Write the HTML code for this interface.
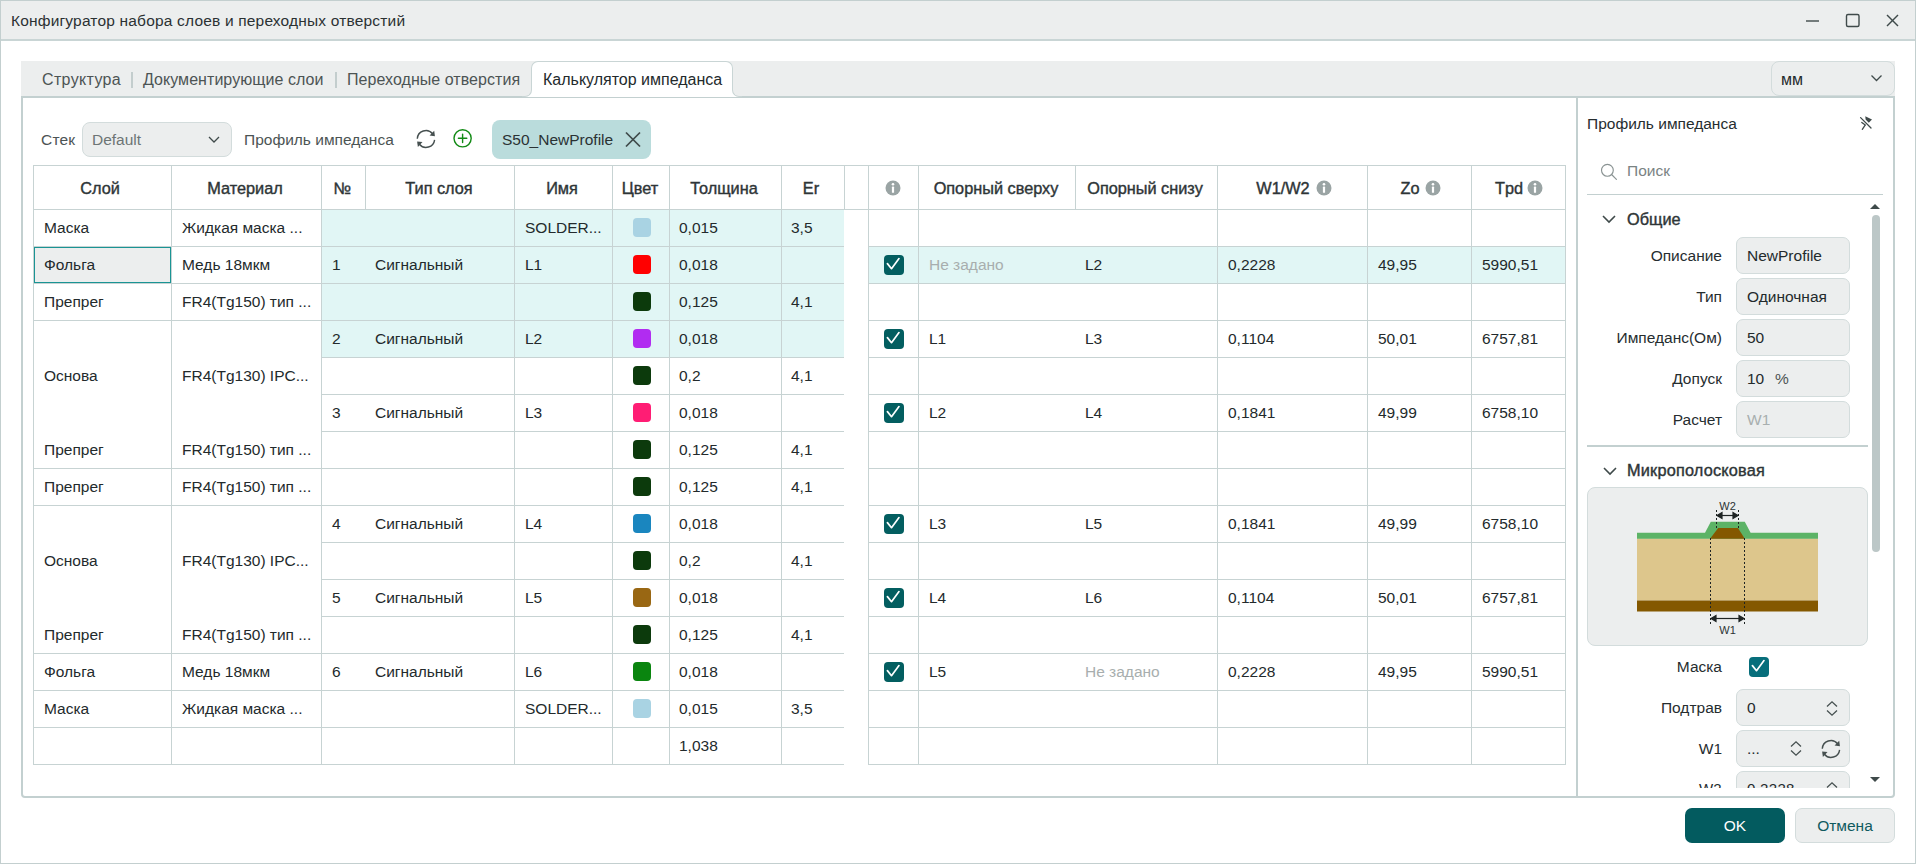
<!DOCTYPE html><html><head><meta charset="utf-8"><style>
html,body{margin:0;padding:0;}
body{width:1916px;height:864px;overflow:hidden;position:relative;background:#fff;font-family:"Liberation Sans",sans-serif;}
.a{position:absolute;box-sizing:border-box;}
.t{position:absolute;white-space:nowrap;}
svg{position:absolute;overflow:visible;}
</style></head><body><div class="a" style="left:0px;top:0px;width:1916px;height:864px;background:#fff;border:1px solid #c3cfcf;"></div><div class="a" style="left:1px;top:1px;width:1914px;height:38px;background:#eceeee;"></div><div class="a" style="left:1px;top:39px;width:1914px;height:2px;background:#c9d5d5;"></div><div class="t" style="left:11px;top:13px;font-size:15.5px;line-height:15.5px;color:#2b3133;letter-spacing:0.18px;">Конфигуратор набора слоев и переходных отверстий</div><svg style="left:0;top:0" width="1916" height="40"><g stroke="#3f4a4a" stroke-width="1.4" fill="none"><line x1="1806" y1="21" x2="1819" y2="21"/><rect x="1846.5" y="14.5" width="12.5" height="12" rx="1.5"/><line x1="1887" y1="15" x2="1898" y2="26"/><line x1="1898" y1="15" x2="1887" y2="26"/></g></svg><div class="a" style="left:21px;top:61px;width:1874px;height:36px;background:#eceeee;"></div><div class="a" style="left:21px;top:96px;width:1874px;height:702px;background:#fff;border:2px solid #c3d0d0;border-radius:0 0 4px 4px;"></div><div class="a" style="left:531px;top:61px;width:202px;height:36px;background:#fff;border:1px solid #c9d5d5;border-bottom:none;border-radius:7px 7px 0 0;"></div><div class="a" style="left:524px;top:89px;width:8px;height:8px;background:#fff;"></div><div class="a" style="left:522px;top:82px;width:10px;height:15px;background:#eceeee;border-right:1px solid #c9d5d5;border-bottom:1px solid #c9d5d5;border-bottom-right-radius:7px;"></div><div class="a" style="left:732px;top:89px;width:8px;height:8px;background:#fff;"></div><div class="a" style="left:732px;top:82px;width:10px;height:15px;background:#eceeee;border-left:1px solid #c9d5d5;border-bottom:1px solid #c9d5d5;border-bottom-left-radius:7px;"></div><div class="t" style="left:42px;top:72px;font-size:16px;line-height:16px;color:#4c5454;letter-spacing:0.35px;">Структура</div><div class="a" style="left:131px;top:72px;width:2px;height:16px;background:#c3cdcd;"></div><div class="t" style="left:143px;top:72px;font-size:16px;line-height:16px;color:#4c5454;letter-spacing:0.05px;">Документирующие слои</div><div class="a" style="left:335px;top:72px;width:2px;height:16px;background:#c3cdcd;"></div><div class="t" style="left:347px;top:72px;font-size:16px;line-height:16px;color:#4c5454;letter-spacing:0.05px;">Переходные отверстия</div><div class="t" style="left:543px;top:72px;font-size:16px;line-height:16px;color:#232a2c;">Калькулятор импеданса</div><div class="a" style="left:1771px;top:61px;width:124px;height:35px;background:#eceeee;border:1px solid #d3dcdc;border-radius:8px;"></div><div class="t" style="left:1781px;top:72px;font-size:16px;line-height:16px;color:#232a2c;">мм</div><svg style="left:0;top:0" width="1916" height="100"><polyline points="1871.5,75.5 1876.5,80.5 1881.5,75.5" stroke="#3f4a4a" stroke-width="1.3" fill="none"/></svg><div class="t" style="left:41px;top:132px;font-size:15.5px;line-height:15.5px;color:#4c5454;letter-spacing:0.2px;">Стек</div><div class="a" style="left:82px;top:122px;width:150px;height:35px;background:#eceeee;border:1px solid #d3dcdc;border-radius:8px;"></div><div class="t" style="left:92px;top:132px;font-size:15.5px;line-height:15.5px;color:#6d7575;">Default</div><svg style="left:0;top:0" width="400" height="200"><polyline points="209,137 214,142 219,137" stroke="#3f4a4a" stroke-width="1.3" fill="none"/></svg><div class="t" style="left:244px;top:132px;font-size:15.5px;line-height:15.5px;color:#4c5454;">Профиль импеданса</div><svg style="left:416px;top:129px" width="20" height="20" viewBox="0 0 20 20"><g fill="none" stroke="#465050" stroke-width="1.4"><path d="M1.3 9.8 A8.6 8.6 0 0 1 16.6 4.8"/><path d="M18.6 10.8 A8.6 8.6 0 0 1 3.4 15.2"/></g><path d="M18.2 1.8 L18.9 7.2 L13.6 6.4 Z" fill="#465050"/><path d="M1.1 12.4 L6.5 13.1 L1.9 18.1 Z" fill="#465050"/></svg><svg style="left:452px;top:129px" width="20" height="20" viewBox="0 0 20 20"><circle cx="10.6" cy="9.3" r="8.6" fill="none" stroke="#118a14" stroke-width="1.4"/>
<line x1="10.6" y1="5.1" x2="10.6" y2="13.5" stroke="#118a14" stroke-width="1.4" stroke-linecap="round"/><line x1="6.4" y1="9.3" x2="14.8" y2="9.3" stroke="#118a14" stroke-width="1.4" stroke-linecap="round"/></svg><div class="a" style="left:492px;top:120px;width:159px;height:39px;background:#badcdc;border-radius:8px;"></div><div class="t" style="left:502px;top:132px;font-size:15.5px;line-height:15.5px;color:#2a3234;">S50_NewProfile</div><svg style="left:0;top:0" width="700" height="200"><g stroke="#3f4a4a" stroke-width="1.7"><line x1="626" y1="132.5" x2="640" y2="146.5"/><line x1="640" y1="132.5" x2="626" y2="146.5"/></g></svg><div class="a" style="left:321px;top:209px;width:523px;height:148px;background:#e1f6f5;"></div><div class="a" style="left:868px;top:246px;width:697px;height:37px;background:#e1f6f5;"></div><div class="a" style="left:34px;top:247px;width:137px;height:36px;background:#eceeee;border:1px solid #1a9494;"></div><div class="a" style="left:33px;top:165px;width:1533px;height:1px;background:#c7d3d3"></div><div class="a" style="left:33px;top:209px;width:1533px;height:1px;background:#c7d3d3"></div><div class="a" style="left:33px;top:246px;width:811px;height:1px;background:#c7d3d3"></div><div class="a" style="left:868px;top:246px;width:698px;height:1px;background:#c7d3d3"></div><div class="a" style="left:33px;top:283px;width:811px;height:1px;background:#c7d3d3"></div><div class="a" style="left:868px;top:283px;width:698px;height:1px;background:#c7d3d3"></div><div class="a" style="left:33px;top:320px;width:811px;height:1px;background:#c7d3d3"></div><div class="a" style="left:868px;top:320px;width:698px;height:1px;background:#c7d3d3"></div><div class="a" style="left:321px;top:357px;width:523px;height:1px;background:#c7d3d3"></div><div class="a" style="left:868px;top:357px;width:698px;height:1px;background:#c7d3d3"></div><div class="a" style="left:321px;top:394px;width:523px;height:1px;background:#c7d3d3"></div><div class="a" style="left:868px;top:394px;width:698px;height:1px;background:#c7d3d3"></div><div class="a" style="left:321px;top:431px;width:523px;height:1px;background:#c7d3d3"></div><div class="a" style="left:868px;top:431px;width:698px;height:1px;background:#c7d3d3"></div><div class="a" style="left:33px;top:468px;width:811px;height:1px;background:#c7d3d3"></div><div class="a" style="left:868px;top:468px;width:698px;height:1px;background:#c7d3d3"></div><div class="a" style="left:33px;top:505px;width:811px;height:1px;background:#c7d3d3"></div><div class="a" style="left:868px;top:505px;width:698px;height:1px;background:#c7d3d3"></div><div class="a" style="left:321px;top:542px;width:523px;height:1px;background:#c7d3d3"></div><div class="a" style="left:868px;top:542px;width:698px;height:1px;background:#c7d3d3"></div><div class="a" style="left:321px;top:579px;width:523px;height:1px;background:#c7d3d3"></div><div class="a" style="left:868px;top:579px;width:698px;height:1px;background:#c7d3d3"></div><div class="a" style="left:321px;top:616px;width:523px;height:1px;background:#c7d3d3"></div><div class="a" style="left:868px;top:616px;width:698px;height:1px;background:#c7d3d3"></div><div class="a" style="left:33px;top:653px;width:811px;height:1px;background:#c7d3d3"></div><div class="a" style="left:868px;top:653px;width:698px;height:1px;background:#c7d3d3"></div><div class="a" style="left:33px;top:690px;width:811px;height:1px;background:#c7d3d3"></div><div class="a" style="left:868px;top:690px;width:698px;height:1px;background:#c7d3d3"></div><div class="a" style="left:33px;top:727px;width:811px;height:1px;background:#c7d3d3"></div><div class="a" style="left:868px;top:727px;width:698px;height:1px;background:#c7d3d3"></div><div class="a" style="left:33px;top:764px;width:811px;height:1px;background:#c7d3d3"></div><div class="a" style="left:868px;top:764px;width:698px;height:1px;background:#c7d3d3"></div><div class="a" style="left:33px;top:165px;width:1px;height:44px;background:#c7d3d3"></div><div class="a" style="left:171px;top:165px;width:1px;height:44px;background:#c7d3d3"></div><div class="a" style="left:321px;top:165px;width:1px;height:44px;background:#c7d3d3"></div><div class="a" style="left:365px;top:165px;width:1px;height:44px;background:#c7d3d3"></div><div class="a" style="left:514px;top:165px;width:1px;height:44px;background:#c7d3d3"></div><div class="a" style="left:612px;top:165px;width:1px;height:44px;background:#c7d3d3"></div><div class="a" style="left:669px;top:165px;width:1px;height:44px;background:#c7d3d3"></div><div class="a" style="left:781px;top:165px;width:1px;height:44px;background:#c7d3d3"></div><div class="a" style="left:844px;top:165px;width:1px;height:44px;background:#c7d3d3"></div><div class="a" style="left:868px;top:165px;width:1px;height:44px;background:#c7d3d3"></div><div class="a" style="left:918px;top:165px;width:1px;height:44px;background:#c7d3d3"></div><div class="a" style="left:1075px;top:165px;width:1px;height:44px;background:#c7d3d3"></div><div class="a" style="left:1217px;top:165px;width:1px;height:44px;background:#c7d3d3"></div><div class="a" style="left:1367px;top:165px;width:1px;height:44px;background:#c7d3d3"></div><div class="a" style="left:1471px;top:165px;width:1px;height:44px;background:#c7d3d3"></div><div class="a" style="left:1565px;top:165px;width:1px;height:44px;background:#c7d3d3"></div><div class="a" style="left:33px;top:209px;width:1px;height:556px;background:#c7d3d3"></div><div class="a" style="left:171px;top:209px;width:1px;height:556px;background:#c7d3d3"></div><div class="a" style="left:321px;top:209px;width:1px;height:556px;background:#c7d3d3"></div><div class="a" style="left:514px;top:209px;width:1px;height:556px;background:#c7d3d3"></div><div class="a" style="left:612px;top:209px;width:1px;height:556px;background:#c7d3d3"></div><div class="a" style="left:669px;top:209px;width:1px;height:556px;background:#c7d3d3"></div><div class="a" style="left:781px;top:209px;width:1px;height:556px;background:#c7d3d3"></div><div class="a" style="left:868px;top:209px;width:1px;height:556px;background:#c7d3d3"></div><div class="a" style="left:918px;top:209px;width:1px;height:556px;background:#c7d3d3"></div><div class="a" style="left:1217px;top:209px;width:1px;height:556px;background:#c7d3d3"></div><div class="a" style="left:1367px;top:209px;width:1px;height:556px;background:#c7d3d3"></div><div class="a" style="left:1471px;top:209px;width:1px;height:556px;background:#c7d3d3"></div><div class="a" style="left:1565px;top:209px;width:1px;height:556px;background:#c7d3d3"></div><div class="t" style="left:-100px;width:400px;text-align:center;top:180px;font-size:16.3px;line-height:16.3px;color:#2e3537;-webkit-text-stroke:0.4px #2e3537;">Слой</div><div class="t" style="left:45px;width:400px;text-align:center;top:180px;font-size:16.3px;line-height:16.3px;color:#2e3537;-webkit-text-stroke:0.4px #2e3537;">Материал</div><div class="t" style="left:142px;width:400px;text-align:center;top:180px;font-size:16.3px;line-height:16.3px;color:#2e3537;-webkit-text-stroke:0.4px #2e3537;">№</div><div class="t" style="left:239px;width:400px;text-align:center;top:180px;font-size:16.3px;line-height:16.3px;color:#2e3537;-webkit-text-stroke:0.4px #2e3537;">Тип слоя</div><div class="t" style="left:362px;width:400px;text-align:center;top:180px;font-size:16.3px;line-height:16.3px;color:#2e3537;-webkit-text-stroke:0.4px #2e3537;">Имя</div><div class="t" style="left:440px;width:400px;text-align:center;top:180px;font-size:16.3px;line-height:16.3px;color:#2e3537;-webkit-text-stroke:0.4px #2e3537;">Цвет</div><div class="t" style="left:524px;width:400px;text-align:center;top:180px;font-size:16.3px;line-height:16.3px;color:#2e3537;-webkit-text-stroke:0.4px #2e3537;">Толщина</div><div class="t" style="left:611px;width:400px;text-align:center;top:180px;font-size:16.3px;line-height:16.3px;color:#2e3537;-webkit-text-stroke:0.4px #2e3537;">Er</div><div class="t" style="left:796px;width:400px;text-align:center;top:180px;font-size:16.3px;line-height:16.3px;color:#2e3537;-webkit-text-stroke:0.4px #2e3537;">Опорный сверху</div><div class="t" style="left:945px;width:400px;text-align:center;top:180px;font-size:16.3px;line-height:16.3px;color:#2e3537;-webkit-text-stroke:0.4px #2e3537;">Опорный снизу</div><div class="t" style="left:1083px;width:400px;text-align:center;top:180px;font-size:16.3px;line-height:16.3px;color:#2e3537;-webkit-text-stroke:0.4px #2e3537;">W1/W2</div><div class="t" style="left:1210px;width:400px;text-align:center;top:180px;font-size:16.3px;line-height:16.3px;color:#2e3537;-webkit-text-stroke:0.4px #2e3537;">Zo</div><div class="t" style="left:1309px;width:400px;text-align:center;top:180px;font-size:16.3px;line-height:16.3px;color:#2e3537;-webkit-text-stroke:0.4px #2e3537;">Tpd</div><svg style="left:885px;top:179.5px" width="16" height="16" viewBox="0 0 16 16"><circle cx="8" cy="8" r="7.5" fill="#9aa4a4"/><circle cx="8" cy="4.3" r="1.3" fill="#fff"/><rect x="6.9" y="6.6" width="2.2" height="6.2" rx="0.6" fill="#fff"/></svg><svg style="left:1315.5px;top:179.5px" width="16" height="16" viewBox="0 0 16 16"><circle cx="8" cy="8" r="7.5" fill="#9aa4a4"/><circle cx="8" cy="4.3" r="1.3" fill="#fff"/><rect x="6.9" y="6.6" width="2.2" height="6.2" rx="0.6" fill="#fff"/></svg><svg style="left:1424.5px;top:179.5px" width="16" height="16" viewBox="0 0 16 16"><circle cx="8" cy="8" r="7.5" fill="#9aa4a4"/><circle cx="8" cy="4.3" r="1.3" fill="#fff"/><rect x="6.9" y="6.6" width="2.2" height="6.2" rx="0.6" fill="#fff"/></svg><svg style="left:1526.5px;top:179.5px" width="16" height="16" viewBox="0 0 16 16"><circle cx="8" cy="8" r="7.5" fill="#9aa4a4"/><circle cx="8" cy="4.3" r="1.3" fill="#fff"/><rect x="6.9" y="6.6" width="2.2" height="6.2" rx="0.6" fill="#fff"/></svg><div class="t" style="left:44px;top:220px;font-size:15.5px;line-height:15.5px;color:#232a2c;">Маска</div><div class="t" style="left:182px;top:220px;font-size:15.5px;line-height:15.5px;color:#232a2c;">Жидкая маска ...</div><div class="t" style="left:525px;top:220px;font-size:15.5px;line-height:15.5px;color:#232a2c;">SOLDER...</div><div class="a" style="left:633px;top:218px;width:18px;height:19px;background:#a9d3e3;border-radius:4px;"></div><div class="t" style="left:679px;top:220px;font-size:15.5px;line-height:15.5px;color:#232a2c;">0,015</div><div class="t" style="left:791px;top:220px;font-size:15.5px;line-height:15.5px;color:#232a2c;">3,5</div><div class="t" style="left:44px;top:257px;font-size:15.5px;line-height:15.5px;color:#232a2c;">Фольга</div><div class="t" style="left:182px;top:257px;font-size:15.5px;line-height:15.5px;color:#232a2c;">Медь 18мкм</div><div class="t" style="left:332px;top:257px;font-size:15.5px;line-height:15.5px;color:#232a2c;">1</div><div class="t" style="left:375px;top:257px;font-size:15.5px;line-height:15.5px;color:#232a2c;">Сигнальный</div><div class="t" style="left:525px;top:257px;font-size:15.5px;line-height:15.5px;color:#232a2c;">L1</div><div class="a" style="left:633px;top:255px;width:18px;height:19px;background:#ff0000;border-radius:4px;"></div><div class="t" style="left:679px;top:257px;font-size:15.5px;line-height:15.5px;color:#232a2c;">0,018</div><div class="t" style="left:44px;top:294px;font-size:15.5px;line-height:15.5px;color:#232a2c;">Препрег</div><div class="t" style="left:182px;top:294px;font-size:15.5px;line-height:15.5px;color:#232a2c;">FR4(Tg150) тип ...</div><div class="a" style="left:633px;top:292px;width:18px;height:19px;background:#0c3a0c;border-radius:4px;"></div><div class="t" style="left:679px;top:294px;font-size:15.5px;line-height:15.5px;color:#232a2c;">0,125</div><div class="t" style="left:791px;top:294px;font-size:15.5px;line-height:15.5px;color:#232a2c;">4,1</div><div class="t" style="left:332px;top:331px;font-size:15.5px;line-height:15.5px;color:#232a2c;">2</div><div class="t" style="left:375px;top:331px;font-size:15.5px;line-height:15.5px;color:#232a2c;">Сигнальный</div><div class="t" style="left:525px;top:331px;font-size:15.5px;line-height:15.5px;color:#232a2c;">L2</div><div class="a" style="left:633px;top:329px;width:18px;height:19px;background:#b12cf1;border-radius:4px;"></div><div class="t" style="left:679px;top:331px;font-size:15.5px;line-height:15.5px;color:#232a2c;">0,018</div><div class="a" style="left:633px;top:366px;width:18px;height:19px;background:#0c3a0c;border-radius:4px;"></div><div class="t" style="left:679px;top:368px;font-size:15.5px;line-height:15.5px;color:#232a2c;">0,2</div><div class="t" style="left:791px;top:368px;font-size:15.5px;line-height:15.5px;color:#232a2c;">4,1</div><div class="t" style="left:332px;top:405px;font-size:15.5px;line-height:15.5px;color:#232a2c;">3</div><div class="t" style="left:375px;top:405px;font-size:15.5px;line-height:15.5px;color:#232a2c;">Сигнальный</div><div class="t" style="left:525px;top:405px;font-size:15.5px;line-height:15.5px;color:#232a2c;">L3</div><div class="a" style="left:633px;top:403px;width:18px;height:19px;background:#ff1d74;border-radius:4px;"></div><div class="t" style="left:679px;top:405px;font-size:15.5px;line-height:15.5px;color:#232a2c;">0,018</div><div class="t" style="left:44px;top:442px;font-size:15.5px;line-height:15.5px;color:#232a2c;">Препрег</div><div class="t" style="left:182px;top:442px;font-size:15.5px;line-height:15.5px;color:#232a2c;">FR4(Tg150) тип ...</div><div class="a" style="left:633px;top:440px;width:18px;height:19px;background:#0c3a0c;border-radius:4px;"></div><div class="t" style="left:679px;top:442px;font-size:15.5px;line-height:15.5px;color:#232a2c;">0,125</div><div class="t" style="left:791px;top:442px;font-size:15.5px;line-height:15.5px;color:#232a2c;">4,1</div><div class="t" style="left:44px;top:479px;font-size:15.5px;line-height:15.5px;color:#232a2c;">Препрег</div><div class="t" style="left:182px;top:479px;font-size:15.5px;line-height:15.5px;color:#232a2c;">FR4(Tg150) тип ...</div><div class="a" style="left:633px;top:477px;width:18px;height:19px;background:#0c3a0c;border-radius:4px;"></div><div class="t" style="left:679px;top:479px;font-size:15.5px;line-height:15.5px;color:#232a2c;">0,125</div><div class="t" style="left:791px;top:479px;font-size:15.5px;line-height:15.5px;color:#232a2c;">4,1</div><div class="t" style="left:332px;top:516px;font-size:15.5px;line-height:15.5px;color:#232a2c;">4</div><div class="t" style="left:375px;top:516px;font-size:15.5px;line-height:15.5px;color:#232a2c;">Сигнальный</div><div class="t" style="left:525px;top:516px;font-size:15.5px;line-height:15.5px;color:#232a2c;">L4</div><div class="a" style="left:633px;top:514px;width:18px;height:19px;background:#1a86bf;border-radius:4px;"></div><div class="t" style="left:679px;top:516px;font-size:15.5px;line-height:15.5px;color:#232a2c;">0,018</div><div class="a" style="left:633px;top:551px;width:18px;height:19px;background:#0c3a0c;border-radius:4px;"></div><div class="t" style="left:679px;top:553px;font-size:15.5px;line-height:15.5px;color:#232a2c;">0,2</div><div class="t" style="left:791px;top:553px;font-size:15.5px;line-height:15.5px;color:#232a2c;">4,1</div><div class="t" style="left:332px;top:590px;font-size:15.5px;line-height:15.5px;color:#232a2c;">5</div><div class="t" style="left:375px;top:590px;font-size:15.5px;line-height:15.5px;color:#232a2c;">Сигнальный</div><div class="t" style="left:525px;top:590px;font-size:15.5px;line-height:15.5px;color:#232a2c;">L5</div><div class="a" style="left:633px;top:588px;width:18px;height:19px;background:#996713;border-radius:4px;"></div><div class="t" style="left:679px;top:590px;font-size:15.5px;line-height:15.5px;color:#232a2c;">0,018</div><div class="t" style="left:44px;top:627px;font-size:15.5px;line-height:15.5px;color:#232a2c;">Препрег</div><div class="t" style="left:182px;top:627px;font-size:15.5px;line-height:15.5px;color:#232a2c;">FR4(Tg150) тип ...</div><div class="a" style="left:633px;top:625px;width:18px;height:19px;background:#0c3a0c;border-radius:4px;"></div><div class="t" style="left:679px;top:627px;font-size:15.5px;line-height:15.5px;color:#232a2c;">0,125</div><div class="t" style="left:791px;top:627px;font-size:15.5px;line-height:15.5px;color:#232a2c;">4,1</div><div class="t" style="left:44px;top:664px;font-size:15.5px;line-height:15.5px;color:#232a2c;">Фольга</div><div class="t" style="left:182px;top:664px;font-size:15.5px;line-height:15.5px;color:#232a2c;">Медь 18мкм</div><div class="t" style="left:332px;top:664px;font-size:15.5px;line-height:15.5px;color:#232a2c;">6</div><div class="t" style="left:375px;top:664px;font-size:15.5px;line-height:15.5px;color:#232a2c;">Сигнальный</div><div class="t" style="left:525px;top:664px;font-size:15.5px;line-height:15.5px;color:#232a2c;">L6</div><div class="a" style="left:633px;top:662px;width:18px;height:19px;background:#0a850f;border-radius:4px;"></div><div class="t" style="left:679px;top:664px;font-size:15.5px;line-height:15.5px;color:#232a2c;">0,018</div><div class="t" style="left:44px;top:701px;font-size:15.5px;line-height:15.5px;color:#232a2c;">Маска</div><div class="t" style="left:182px;top:701px;font-size:15.5px;line-height:15.5px;color:#232a2c;">Жидкая маска ...</div><div class="t" style="left:525px;top:701px;font-size:15.5px;line-height:15.5px;color:#232a2c;">SOLDER...</div><div class="a" style="left:633px;top:699px;width:18px;height:19px;background:#a9d3e3;border-radius:4px;"></div><div class="t" style="left:679px;top:701px;font-size:15.5px;line-height:15.5px;color:#232a2c;">0,015</div><div class="t" style="left:791px;top:701px;font-size:15.5px;line-height:15.5px;color:#232a2c;">3,5</div><div class="t" style="left:44px;top:368px;font-size:15.5px;line-height:15.5px;color:#232a2c;">Основа</div><div class="t" style="left:182px;top:368px;font-size:15.5px;line-height:15.5px;color:#232a2c;">FR4(Tg130) IPC...</div><div class="t" style="left:44px;top:553px;font-size:15.5px;line-height:15.5px;color:#232a2c;">Основа</div><div class="t" style="left:182px;top:553px;font-size:15.5px;line-height:15.5px;color:#232a2c;">FR4(Tg130) IPC...</div><div class="t" style="left:679px;top:738px;font-size:15.5px;line-height:15.5px;color:#232a2c;">1,038</div><svg style="left:884px;top:255px" width="20" height="20" viewBox="0 0 20 20"><rect x="0" y="0" width="20" height="20" rx="4" fill="#035e60"/><polyline points="3.4,8.6 7.5,13.7 15,3.6" fill="none" stroke="#fff" stroke-width="1.7" stroke-linecap="round" stroke-linejoin="round"/></svg><div class="t" style="left:929px;top:257px;font-size:15.5px;line-height:15.5px;color:#a8aeae;">Не задано</div><div class="t" style="left:1085px;top:257px;font-size:15.5px;line-height:15.5px;color:#232a2c;">L2</div><div class="t" style="left:1228px;top:257px;font-size:15.5px;line-height:15.5px;color:#232a2c;">0,2228</div><div class="t" style="left:1378px;top:257px;font-size:15.5px;line-height:15.5px;color:#232a2c;">49,95</div><div class="t" style="left:1482px;top:257px;font-size:15.5px;line-height:15.5px;color:#232a2c;">5990,51</div><svg style="left:884px;top:329px" width="20" height="20" viewBox="0 0 20 20"><rect x="0" y="0" width="20" height="20" rx="4" fill="#035e60"/><polyline points="3.4,8.6 7.5,13.7 15,3.6" fill="none" stroke="#fff" stroke-width="1.7" stroke-linecap="round" stroke-linejoin="round"/></svg><div class="t" style="left:929px;top:331px;font-size:15.5px;line-height:15.5px;color:#232a2c;">L1</div><div class="t" style="left:1085px;top:331px;font-size:15.5px;line-height:15.5px;color:#232a2c;">L3</div><div class="t" style="left:1228px;top:331px;font-size:15.5px;line-height:15.5px;color:#232a2c;">0,1104</div><div class="t" style="left:1378px;top:331px;font-size:15.5px;line-height:15.5px;color:#232a2c;">50,01</div><div class="t" style="left:1482px;top:331px;font-size:15.5px;line-height:15.5px;color:#232a2c;">6757,81</div><svg style="left:884px;top:403px" width="20" height="20" viewBox="0 0 20 20"><rect x="0" y="0" width="20" height="20" rx="4" fill="#035e60"/><polyline points="3.4,8.6 7.5,13.7 15,3.6" fill="none" stroke="#fff" stroke-width="1.7" stroke-linecap="round" stroke-linejoin="round"/></svg><div class="t" style="left:929px;top:405px;font-size:15.5px;line-height:15.5px;color:#232a2c;">L2</div><div class="t" style="left:1085px;top:405px;font-size:15.5px;line-height:15.5px;color:#232a2c;">L4</div><div class="t" style="left:1228px;top:405px;font-size:15.5px;line-height:15.5px;color:#232a2c;">0,1841</div><div class="t" style="left:1378px;top:405px;font-size:15.5px;line-height:15.5px;color:#232a2c;">49,99</div><div class="t" style="left:1482px;top:405px;font-size:15.5px;line-height:15.5px;color:#232a2c;">6758,10</div><svg style="left:884px;top:514px" width="20" height="20" viewBox="0 0 20 20"><rect x="0" y="0" width="20" height="20" rx="4" fill="#035e60"/><polyline points="3.4,8.6 7.5,13.7 15,3.6" fill="none" stroke="#fff" stroke-width="1.7" stroke-linecap="round" stroke-linejoin="round"/></svg><div class="t" style="left:929px;top:516px;font-size:15.5px;line-height:15.5px;color:#232a2c;">L3</div><div class="t" style="left:1085px;top:516px;font-size:15.5px;line-height:15.5px;color:#232a2c;">L5</div><div class="t" style="left:1228px;top:516px;font-size:15.5px;line-height:15.5px;color:#232a2c;">0,1841</div><div class="t" style="left:1378px;top:516px;font-size:15.5px;line-height:15.5px;color:#232a2c;">49,99</div><div class="t" style="left:1482px;top:516px;font-size:15.5px;line-height:15.5px;color:#232a2c;">6758,10</div><svg style="left:884px;top:588px" width="20" height="20" viewBox="0 0 20 20"><rect x="0" y="0" width="20" height="20" rx="4" fill="#035e60"/><polyline points="3.4,8.6 7.5,13.7 15,3.6" fill="none" stroke="#fff" stroke-width="1.7" stroke-linecap="round" stroke-linejoin="round"/></svg><div class="t" style="left:929px;top:590px;font-size:15.5px;line-height:15.5px;color:#232a2c;">L4</div><div class="t" style="left:1085px;top:590px;font-size:15.5px;line-height:15.5px;color:#232a2c;">L6</div><div class="t" style="left:1228px;top:590px;font-size:15.5px;line-height:15.5px;color:#232a2c;">0,1104</div><div class="t" style="left:1378px;top:590px;font-size:15.5px;line-height:15.5px;color:#232a2c;">50,01</div><div class="t" style="left:1482px;top:590px;font-size:15.5px;line-height:15.5px;color:#232a2c;">6757,81</div><svg style="left:884px;top:662px" width="20" height="20" viewBox="0 0 20 20"><rect x="0" y="0" width="20" height="20" rx="4" fill="#035e60"/><polyline points="3.4,8.6 7.5,13.7 15,3.6" fill="none" stroke="#fff" stroke-width="1.7" stroke-linecap="round" stroke-linejoin="round"/></svg><div class="t" style="left:929px;top:664px;font-size:15.5px;line-height:15.5px;color:#232a2c;">L5</div><div class="t" style="left:1085px;top:664px;font-size:15.5px;line-height:15.5px;color:#a8aeae;">Не задано</div><div class="t" style="left:1228px;top:664px;font-size:15.5px;line-height:15.5px;color:#232a2c;">0,2228</div><div class="t" style="left:1378px;top:664px;font-size:15.5px;line-height:15.5px;color:#232a2c;">49,95</div><div class="t" style="left:1482px;top:664px;font-size:15.5px;line-height:15.5px;color:#232a2c;">5990,51</div><div class="a" style="left:1576px;top:97px;width:2px;height:700px;background:#c3d0d0;"></div><div class="t" style="left:1587px;top:116px;font-size:15.5px;line-height:15.5px;color:#262d2f;">Профиль импеданса</div><svg style="left:0;top:0" width="1916" height="200"><g stroke="#3f4a4a" stroke-width="1.3" stroke-linecap="round" fill="none">
<line x1="1860.6" y1="117.6" x2="1871" y2="128"/><line x1="1861.8" y1="122.4" x2="1865.3" y2="125.1"/><line x1="1864.8" y1="125.6" x2="1862.3" y2="129.3"/></g>
<path d="M1865.3,116.2 L1872,119.5 L1868.8,122.8 L1865.6,119.6 Z" fill="#3f4a4a"/></svg><svg style="left:1600px;top:163px" width="18" height="18" viewBox="0 0 18 18"><circle cx="7.4" cy="7.3" r="5.9" fill="none" stroke="#8a9393" stroke-width="1.15"/><line x1="11.6" y1="11.5" x2="16.4" y2="16.3" stroke="#8a9393" stroke-width="1.15" stroke-linecap="round"/></svg><div class="t" style="left:1627px;top:163px;font-size:15.5px;line-height:15.5px;color:#7a8383;">Поиск</div><div class="a" style="left:1587px;top:194px;width:296px;height:1px;background:#c3d0d0;"></div><svg style="left:0;top:0" width="1916" height="864"><path d="M1870,209 L1880,209 L1875,204 Z" fill="#3f4a4a"/><path d="M1870,777 L1880,777 L1875,782 Z" fill="#3f4a4a"/></svg><div class="a" style="left:1872px;top:215px;width:8px;height:337px;background:#bcc7c7;border-radius:4px;"></div><svg style="left:1602px;top:215px" width="14" height="9"><polyline points="1,1 7,7 13,1" fill="none" stroke="#3f4a4a" stroke-width="1.6"/></svg><div class="t" style="left:1627px;top:211px;font-size:16.3px;line-height:16.3px;color:#2e3537;-webkit-text-stroke:0.4px #2e3537;">Общие</div><div class="a" style="left:1736px;top:237px;width:114px;height:37px;background:#eceeee;border:1px solid #d3dcdc;border-radius:7px;"></div><div class="t" style="right:194px;top:248px;font-size:15.5px;line-height:15.5px;color:#262d2f;">Описание</div><div class="t" style="left:1747px;top:248px;font-size:15.5px;line-height:15.5px;color:#232a2c;">NewProfile</div><div class="a" style="left:1736px;top:278px;width:114px;height:37px;background:#eceeee;border:1px solid #d3dcdc;border-radius:7px;"></div><div class="t" style="right:194px;top:289px;font-size:15.5px;line-height:15.5px;color:#262d2f;">Тип</div><div class="t" style="left:1747px;top:289px;font-size:15.5px;line-height:15.5px;color:#232a2c;">Одиночная</div><div class="a" style="left:1736px;top:319px;width:114px;height:37px;background:#eceeee;border:1px solid #d3dcdc;border-radius:7px;"></div><div class="t" style="right:194px;top:330px;font-size:15.5px;line-height:15.5px;color:#262d2f;">Импеданс(Ом)</div><div class="t" style="left:1747px;top:330px;font-size:15.5px;line-height:15.5px;color:#232a2c;">50</div><div class="a" style="left:1736px;top:360px;width:114px;height:37px;background:#eceeee;border:1px solid #d3dcdc;border-radius:7px;"></div><div class="t" style="right:194px;top:371px;font-size:15.5px;line-height:15.5px;color:#262d2f;">Допуск</div><div class="t" style="left:1747px;top:371px;font-size:15.5px;line-height:15.5px;color:#232a2c;">10</div><div class="a" style="left:1736px;top:401px;width:114px;height:37px;background:#eceeee;border:1px solid #d3dcdc;border-radius:7px;"></div><div class="t" style="right:194px;top:412px;font-size:15.5px;line-height:15.5px;color:#262d2f;">Расчет</div><div class="t" style="left:1747px;top:412px;font-size:15.5px;line-height:15.5px;color:#a8afaf;">W1</div><div class="t" style="left:1775px;top:371px;font-size:15.5px;line-height:15.5px;color:#4c5454;">%</div><div class="a" style="left:1587px;top:445px;width:281px;height:2px;background:#c3d0d0;"></div><svg style="left:1603px;top:467px" width="14" height="9"><polyline points="1,1 7,7 13,1" fill="none" stroke="#3f4a4a" stroke-width="1.6"/></svg><div class="t" style="left:1627px;top:462px;font-size:16.3px;line-height:16.3px;color:#2e3537;letter-spacing:0.2px;-webkit-text-stroke:0.4px #2e3537;">Микрополосковая</div><div class="a" style="left:1587px;top:487px;width:281px;height:159px;background:#eceeee;border:1px solid #d3dcdc;border-radius:8px;"></div><svg style="left:0;top:0" width="1916" height="864">
<rect x="1637" y="538.5" width="181" height="62" fill="#ddc68c"/>
<rect x="1637" y="600.5" width="181" height="11" fill="#845800"/>
<path d="M1637,532.8 L1705,532.8 L1710.8,521.7 L1744.8,521.7 L1750.6,532.8 L1818,532.8 L1818,538.8 L1637,538.8 Z" fill="#5cb366"/>
<path d="M1710,538.8 L1718.2,528.1 L1738,528.1 L1744.8,538.8 Z" fill="#845800"/>
<g stroke="#1e2424" stroke-width="1" stroke-dasharray="2,2" fill="none">
<line x1="1710.5" y1="538" x2="1710.5" y2="625"/><line x1="1744.5" y1="538" x2="1744.5" y2="625"/>
<line x1="1716.5" y1="510" x2="1716.5" y2="530"/><line x1="1738.5" y1="510" x2="1738.5" y2="530"/>
</g>
<g stroke="#1e2424" stroke-width="1.2" fill="#1e2424">
<line x1="1718" y1="515.5" x2="1737" y2="515.5"/><path d="M1717,515.5 L1722,512.5 L1722,518.5 Z"/><path d="M1738,515.5 L1733,512.5 L1733,518.5 Z"/>
<line x1="1712" y1="618.5" x2="1743" y2="618.5"/><path d="M1711,618.5 L1716,615.5 L1716,621.5 Z"/><path d="M1744,618.5 L1739,615.5 L1739,621.5 Z"/>
</g>
<text x="1727.5" y="510" font-family="Liberation Sans" font-size="11" fill="#2b3234" text-anchor="middle">W2</text>
<text x="1727.5" y="634" font-family="Liberation Sans" font-size="11" fill="#2b3234" text-anchor="middle">W1</text>
</svg><div class="t" style="right:194px;top:659px;font-size:15.5px;line-height:15.5px;color:#262d2f;">Маска</div><svg style="left:1749px;top:657px" width="20" height="20" viewBox="0 0 20 20"><rect x="0" y="0" width="20" height="20" rx="4" fill="#076e7b"/><polyline points="3.4,8.6 7.5,13.7 15,3.6" fill="none" stroke="#fff" stroke-width="1.7" stroke-linecap="round" stroke-linejoin="round"/></svg><div class="a" style="left:1736px;top:689px;width:114px;height:37px;background:#eceeee;border:1px solid #d3dcdc;border-radius:7px;"></div><div class="t" style="right:194px;top:700px;font-size:15.5px;line-height:15.5px;color:#262d2f;">Подтрав</div><div class="t" style="left:1747px;top:700px;font-size:15.5px;line-height:15.5px;color:#232a2c;">0</div><svg style="left:1826px;top:700.5px" width="12" height="15"><polyline points="1,5.4 6,0.8 11,5.4" fill="none" stroke="#465050" stroke-width="1.3"/><polyline points="1,9.6 6,14.2 11,9.6" fill="none" stroke="#465050" stroke-width="1.3"/></svg><div class="a" style="left:1736px;top:730px;width:114px;height:37px;background:#eceeee;border:1px solid #d3dcdc;border-radius:7px;"></div><div class="t" style="right:194px;top:741px;font-size:15.5px;line-height:15.5px;color:#262d2f;">W1</div><div class="t" style="left:1747px;top:741px;font-size:15.5px;line-height:15.5px;color:#232a2c;">...</div><svg style="left:1790px;top:741px" width="12" height="15"><polyline points="1,5.4 6,0.8 11,5.4" fill="none" stroke="#465050" stroke-width="1.3"/><polyline points="1,9.6 6,14.2 11,9.6" fill="none" stroke="#465050" stroke-width="1.3"/></svg><svg style="left:1821px;top:739px" width="20" height="20" viewBox="0 0 20 20"><g fill="none" stroke="#465050" stroke-width="1.4"><path d="M1.3 9.8 A8.6 8.6 0 0 1 16.6 4.8"/><path d="M18.6 10.8 A8.6 8.6 0 0 1 3.4 15.2"/></g><path d="M18.2 1.8 L18.9 7.2 L13.6 6.4 Z" fill="#465050"/><path d="M1.1 12.4 L6.5 13.1 L1.9 18.1 Z" fill="#465050"/></svg><div class="a" style="left:1590px;top:771px;width:278px;height:17px;overflow:hidden"><div class="a" style="left:146px;top:0;width:114px;height:37px;background:#eceeee;border:1px solid #d3dcdc;border-radius:7px;"></div><div class="t" style="right:146px;top:10px;font-size:15px;line-height:15px;color:#262d2f;letter-spacing:0.3px">W2</div><div class="t" style="left:157px;top:10px;font-size:15px;line-height:15px;color:#232a2c;letter-spacing:0.3px">0,2228</div><svg style="left:236px;top:11px" width="12" height="15"><polyline points="1,5.4 6,0.8 11,5.4" fill="none" stroke="#465050" stroke-width="1.3"/></svg></div><div class="a" style="left:1685px;top:808px;width:100px;height:35px;background:#035b5f;border-radius:7px;"></div><div class="t" style="left:1535px;width:400px;text-align:center;top:818px;font-size:15.5px;line-height:15.5px;color:#ffffff;">OK</div><div class="a" style="left:1795px;top:808px;width:100px;height:35px;background:#eceeee;border:1px solid #d3dcdc;border-radius:7px;"></div><div class="t" style="left:1645px;width:400px;text-align:center;top:818px;font-size:15.5px;line-height:15.5px;color:#0f5a5f;">Отмена</div></body></html>
